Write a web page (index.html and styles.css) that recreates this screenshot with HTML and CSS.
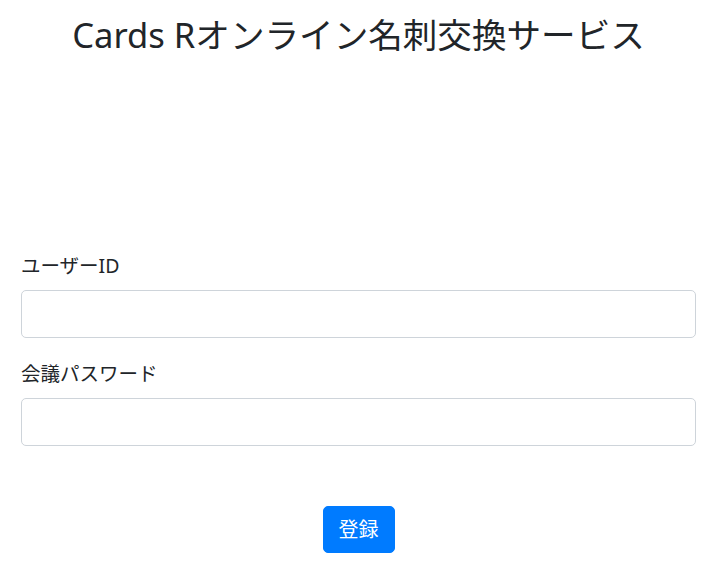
FILE: index.html
```html
<!DOCTYPE html>
<html lang="ja">
<head>
  <meta charset="UTF-8" />
  <meta name="viewport" content="width=device-width, initial-scale=1" />
  <title>Cards R</title>
  <link rel="stylesheet" href="styles.css">
</head>
<body>
  <div class="page">
    <h1 class="title">Cards Rオンライン名刺交換サービス</h1>
    <form class="entry">
      <div class="field">
        <label for="userId">ユーザーID</label>
        <input type="text" id="userId" name="userId" />
      </div>
      <div class="field">
        <label for="password">会議パスワード</label>
        <input type="password" id="password" name="password" />
      </div>
      <div class="actions">
        <button type="submit">登録</button>
      </div>
    </form>
  </div>
</body>
</html>
```

FILE: styles.css
```css
body {
  margin: 0;
  font-family: "Noto Sans", "Noto Sans CJK JP", sans-serif;
  color: #212529;
  background: #fff;
}
.page {
  padding: 0 29px 0 21px;
}
.title {
  margin: 13px 0 0 0;
  font-size: 34.6px;
  font-weight: 400;
  line-height: 43px;
  text-align: center;
}
.entry {
  display: flex;
  flex-direction: column;
  margin-top: 198px;
}
.field {
  display: flex;
  flex-direction: column;
  margin-bottom: 24px;
}
.field label {
  font-size: 19.5px;
  line-height: 24px;
  margin-bottom: 12px;
}
.field input {
  box-sizing: border-box;
  height: 48px;
  padding: 8px 16px;
  border: 1px solid #ced4da;
  border-radius: 5px;
  font-size: 20px;
  font-family: inherit;
}
.actions {
  display: flex;
  justify-content: center;
  margin-top: 36px;
}
button {
  box-sizing: border-box;
  height: 47px;
  padding: 0 15px;
  background-color: #007bff;
  border: 1px solid #007bff;
  border-radius: 5px;
  color: #fff;
  font-size: 20px;
  font-family: inherit;
  line-height: 30px;
  cursor: pointer;
}
```
